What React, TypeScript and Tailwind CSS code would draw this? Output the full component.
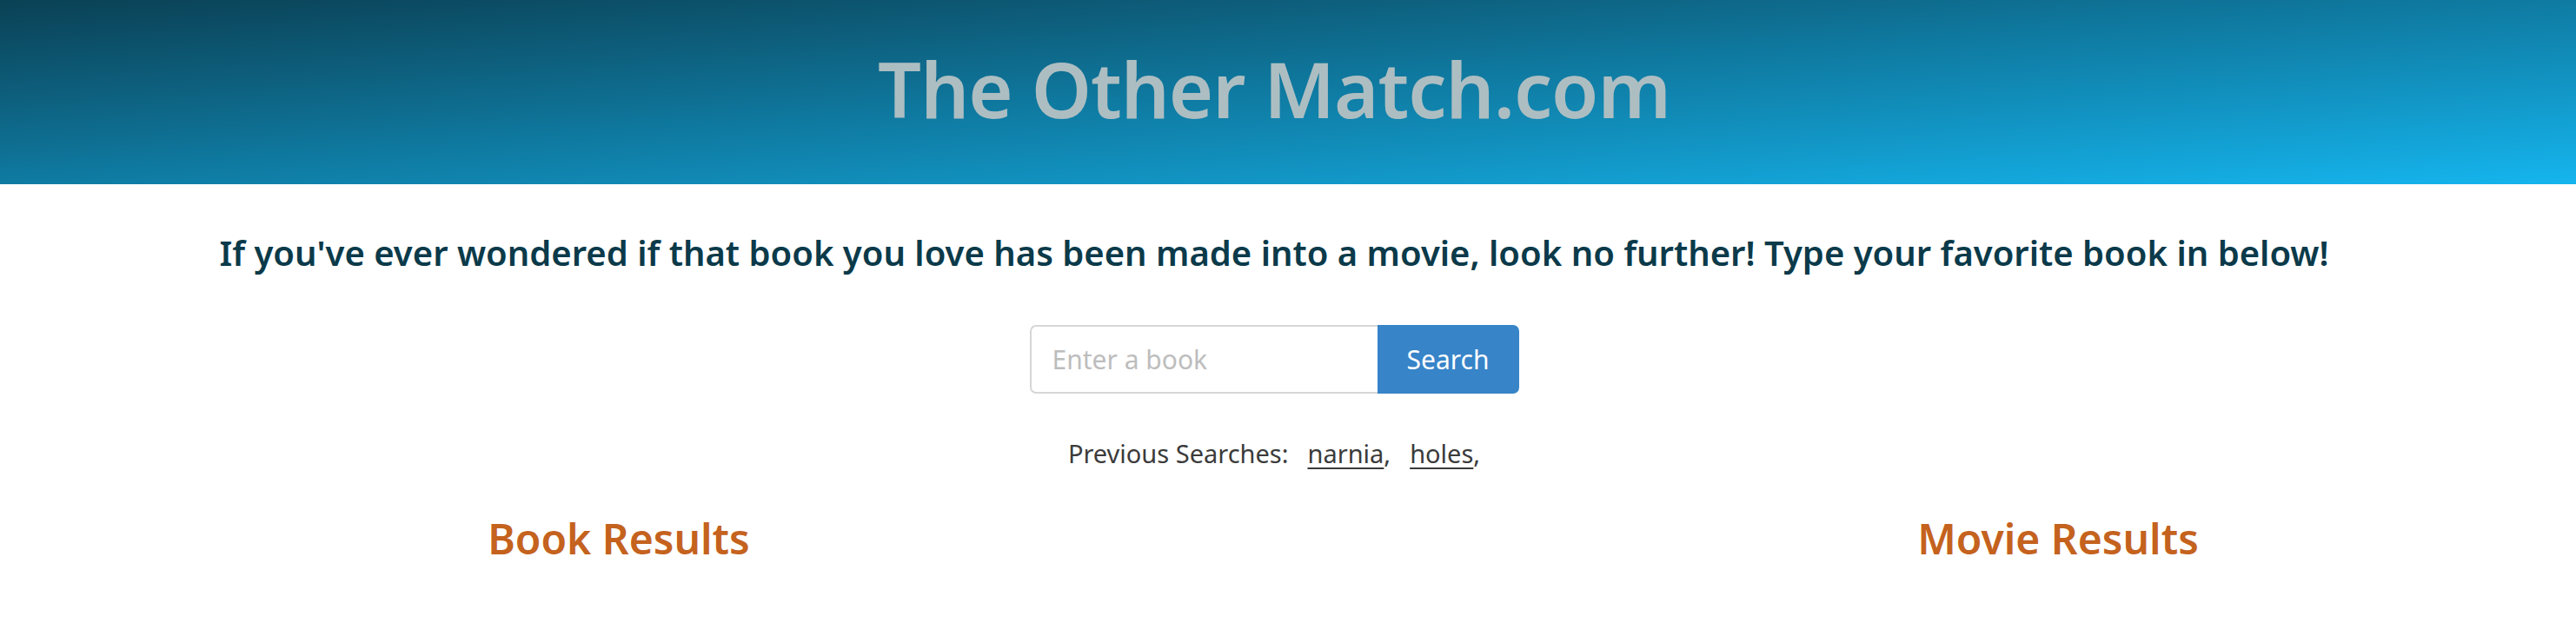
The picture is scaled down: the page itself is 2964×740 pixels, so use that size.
export default function App() {
  const font = { fontFamily: '"Noto Sans", "Open Sans", sans-serif' };
  return (
    <div className="min-h-[740px] bg-white" style={font}>
      <header className="h-[212px] flex items-center justify-center pb-[8px] pr-[32px] bg-linear-to-br from-[#0a4155] via-[#0f7ba2] to-[#15b5ee]">
        <h1 className="text-[88px] leading-none font-semibold text-[#adbec2] tracking-[-1px]">
          The Other Match.com
        </h1>
      </header>
      <div className="pr-[32px] flex flex-col items-center">
        <p className="mt-[59px] text-[40px] leading-none font-semibold text-[#0b3a4a]">
          If you've ever wondered if that book you love has been made into a movie, look no further! Type your favorite book in below!
        </p>
        <form className="mt-[63px] flex" onSubmit={(e) => e.preventDefault()}>
          <input
            type="text"
            placeholder="Enter a book"
            className="w-[400px] h-[79px] border-2 border-[#d6d6d6] border-r-0 rounded-l-[7px] px-[24px] text-[30px] text-[#555] placeholder:text-[#bdbdbd] outline-none"
          />
          <button
            type="submit"
            className="w-[163px] h-[79px] bg-[#3784c8] text-white text-[30px] rounded-r-[7px]"
          >
            Search
          </button>
        </form>
        <div className="mt-[54px] text-[29px] leading-none text-[#3b3b3b] flex items-baseline">
          <span>Previous Searches:</span>
          <span className="ml-[22px] underline underline-offset-[5px]">narnia</span>
          <span>,</span>
          <span className="ml-[22px] underline underline-offset-[5px]">holes</span>
          <span>,</span>
        </div>
      </div>
      <div className="mt-[60px] flex justify-between pl-[218px] pr-[102px]">
        <h2 className="w-[988px] text-center text-[48px] leading-none font-semibold text-[#c4621e]">
          Book Results
        </h2>
        <h2 className="w-[988px] text-center text-[48px] leading-none font-semibold text-[#c4621e]">
          Movie Results
        </h2>
      </div>
    </div>
  );
}
